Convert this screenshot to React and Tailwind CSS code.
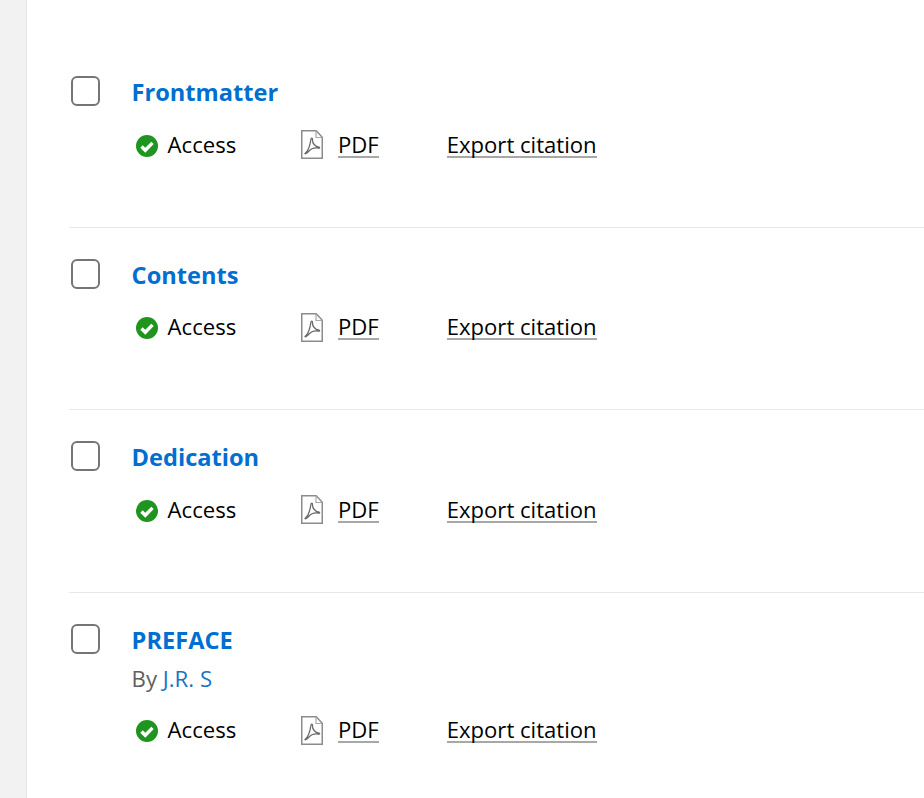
const chapters = [
  { title: 'Frontmatter' },
  { title: 'Contents' },
  { title: 'Dedication' },
  { title: 'PREFACE', author: 'J.R. S' },
]

const CheckIcon = () => (
  <svg width="22" height="22" viewBox="0 0 22 22" className="shrink-0 mt-[2px]">
    <circle cx="11" cy="11" r="11" fill="#1f951f" />
    <path d="M5.500 11.500l3.800 3.800l7.200-7.400" fill="none" stroke="#fff" strokeWidth="3.400" />
  </svg>
)

const PdfIcon = () => (
  <svg width="22" height="29" viewBox="0 0 22 29" fill="none" className="shrink-0">
    <path d="M.75 .75h14.500l6 6.500v21h-20.500z" stroke="#8c8c8c" strokeWidth="1.500" />
    <path d="M15 1v6.500h6" stroke="#a8a8a8" strokeWidth="1.200" />
    <path
      d="M4 23.500c2.500-2 5-8 5.800-13.500c.3-2.500 1.800-2.500 1.700 0c-.2 3 2.500 6.500 6.500 7.200c1 .3 .6 1.100-.5 .9c-3.500-.6-7.500 .5-10 3.400c-1 1.200-3 3-3.500 2z"
      stroke="#6a6a6a"
      strokeWidth="1.300"
    />
  </svg>
)

const ChapterRow = ({ title, author, last }) => (
  <div className={`flex h-[182.6px] ${last ? '' : 'border-b border-[#e8e8e8]'}`}>
    <div className="pt-[31px] pl-[2px] w-[62.6px] shrink-0">
      <div className="w-[29px] h-[30px] rounded-[6px] border-2 border-[#757575] bg-white" />
    </div>
    <div className="flex-1">
      <div className="pt-[30px]">
        <a className="block text-[23.6px] leading-[34px] font-bold text-[#006fd0]">{title}</a>
        {author && (
          <p className="text-[22.2px] leading-[30px] mt-[7px] text-[#5f5f5f]">
            By <span className="text-[#1a73c4]">{author}</span>
          </p>
        )}
      </div>
      <div className={`flex items-center pl-[4px] text-[22.1px] leading-[24px] text-black ${author ? 'mt-[22px]' : 'mt-[21px]'}`}>
        <CheckIcon />
        <span className="ml-[10px] w-[133px] border-b-2 border-transparent">Access</span>
        <PdfIcon />
        <a className="ml-[15.400px] border-b-2 border-[#a8a8a8]">PDF</a>
        <a className="ml-[68px] border-b-2 border-[#a8a8a8]">Export citation</a>
      </div>
    </div>
  </div>
)

export default function App() {
  return (
    <div className="h-[798px] overflow-hidden flex bg-white font-['Open_Sans','Noto_Sans',sans-serif]">
      <div className="w-[27px] shrink-0 bg-[#f2f2f2] border-r border-[#e6e6e6]" />
      <main className="flex-1 pl-[42px] pt-[45px]">
        {chapters.map((c, i) => (
          <ChapterRow key={c.title} {...c} last={i === chapters.length - 1} />
        ))}
      </main>
    </div>
  )
}
